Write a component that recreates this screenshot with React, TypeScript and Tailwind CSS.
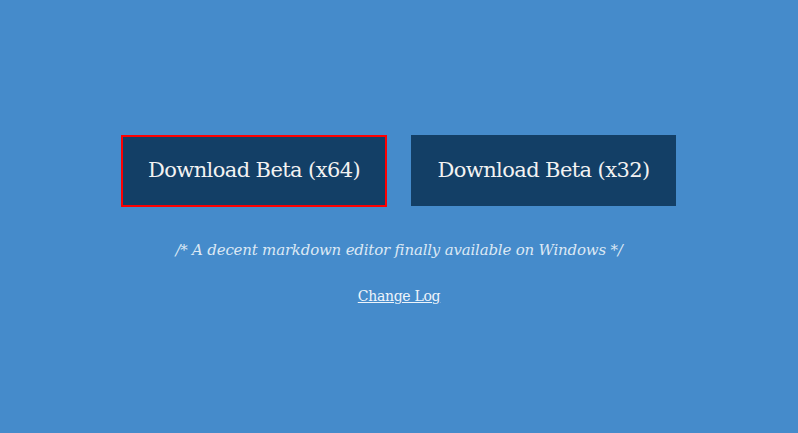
import React from 'react';

const serif = { fontFamily: '"DejaVu Serif", Georgia, serif' };

export default function App() {
  return (
    <div className="w-full h-[433px] bg-[#458bcb] flex flex-col items-center pt-[135px]" style={serif}>
      <div className="flex gap-[24px] -ml-px">
        <button className="w-[266px] h-[72px] bg-[#133f66] border-2 border-[#ff0000] text-[#f2f2f2] text-[21px] tracking-[-0.6px]">
          Download Beta (x64)
        </button>
        <button className="w-[265px] h-[71px] bg-[#133f66] text-[#f2f2f2] text-[21px] tracking-[-0.6px]">
          Download Beta (x32)
        </button>
      </div>
      <p className="mt-[32px] italic text-[#dce8f4] text-[15px] tracking-[-0.2px]">
        /* A decent markdown editor finally available on Windows */
      </p>
      <a href="#" className="mt-[24px] text-[#eef4fa] text-[14px] tracking-[-0.3px] underline">
        Change Log
      </a>
    </div>
  );
}
